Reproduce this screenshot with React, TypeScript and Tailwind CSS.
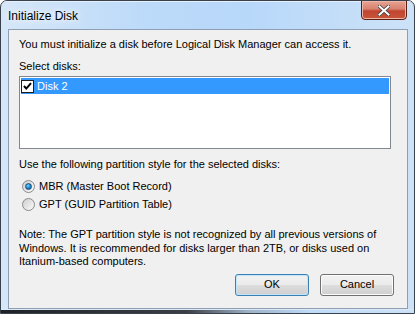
import { useState } from 'react';

const font = { fontFamily: '"Liberation Sans", Arial, sans-serif' };

function Radio({ checked, label, onClick }: { checked: boolean; label: string; onClick: () => void }) {
	return (
		<div className="flex items-center h-[18px] pl-[3px] cursor-default" onClick={onClick}>
			<div className="w-[13px] h-[13px] rounded-full border border-[#8a8a8a] bg-gradient-to-br from-[#cfcfcf] to-[#fafafa] flex items-center justify-center">
				{checked && (
					<div className="w-[7px] h-[7px] rounded-full bg-[radial-gradient(circle_at_40%_35%,#7fd4ff_0%,#1f8fd6_45%,#0d3e6e_100%)] border border-[#1b4f7c]" />
				)}
			</div>
			<span className="ml-[4px]">{label}</span>
		</div>
	);
}

function Button({ label, primary }: { label: string; primary?: boolean }) {
	return (
		<button
			className={
				"w-[74px] h-[22px] rounded-[3px] border text-[11px] text-black bg-[linear-gradient(#f2f2f2_0%,#ebebeb_48%,#dddddd_52%,#cfcfcf_100%)] " +
				(primary ? "border-[#3c7fb1] shadow-[inset_0_0_0_1px_#bfe6fa]" : "border-[#707070] shadow-[inset_0_0_0_1px_#fcfcfc]")
			}
			style={font}
		>{label}</button>
	);
}

export default function App() {
	const [style, setStyle] = useState('mbr');
	const [checked, setChecked] = useState(true);

	return (
		<div className="w-[415px] h-[314px] flex flex-col rounded-t-[7px] border border-[#39414d] bg-[linear-gradient(to_right,#d6e7f8_0%,#bcdaf9_35%,#b8d8fa_60%,#cde2f7_100%)] overflow-hidden text-[11px] text-black" style={font}>
			{/* title bar */}
			<div className="h-[28px] flex items-start border-t border-[#e6f0fb]">
				<span className="pl-[7px] pt-[7px] text-[12px] leading-[14px] [text-shadow:0_0_6px_#ffffff,0_0_10px_#ffffff]">Initialize Disk</span>
				<div className="ml-auto mr-[7px] -mt-[2px] w-[46px] h-[20px] rounded-b-[4px] border border-[#5b2015] bg-[linear-gradient(#e8a493_0%,#d7806d_45%,#c14530_55%,#c7553a_100%)] shadow-[inset_0_0_0_1px_#eeb6a6] flex items-center justify-center">
					<svg width="12" height="11" viewBox="0 0 12 11">
						<path d="M1.5 1.5 L10.5 9.5 M10.5 1.5 L1.5 9.5" stroke="#3d3d3d" strokeWidth="3.6" strokeLinecap="square" />
						<path d="M1.5 1.5 L10.5 9.5 M10.5 1.5 L1.5 9.5" stroke="#ffffff" strokeWidth="2" strokeLinecap="square" />
					</svg>
				</div>
			</div>

			{/* client area */}
			<div className="flex-1 ml-[7px] mr-[6px] border border-[#8f9fb3] bg-[#f0f0f0] flex flex-col pl-[10px] pr-[13px] pt-[8px] leading-[13px]">
				<div>You must initialize a disk before Logical Disk Manager can access it.</div>
				<div className="mt-[9px]">Select disks:</div>
				<div className="mt-[3px] w-[372px] h-[73px] border border-[#828790] bg-white p-[1px]">
					<div className="h-[16px] bg-[#3399ff] text-white flex items-center cursor-default" onClick={() => setChecked(!checked)}>
						<div className="w-[13px] h-[13px] border border-[#1e1e1e] bg-white flex items-center justify-center">
							{checked && (
								<svg width="9" height="9" viewBox="0 0 9 9">
									<path d="M1 4 L3.3 6.6 L8 1.2" stroke="#000" strokeWidth="2" fill="none" />
								</svg>
							)}
						</div>
						<span className="ml-[3px]">Disk 2</span>
					</div>
				</div>
				<div className="mt-[9px]">Use the following partition style for the selected disks:</div>
				<div className="mt-[6px]">
					<Radio checked={style === 'mbr'} label="MBR (Master Boot Record)" onClick={() => setStyle('mbr')} />
					<Radio checked={style === 'gpt'} label="GPT (GUID Partition Table)" onClick={() => setStyle('gpt')} />
				</div>
				<div className="mt-[15px] leading-[13.5px]">
					Note: The GPT partition style is not recognized by all previous versions of<br />
					Windows. It is recommended for disks larger than 2TB, or disks used on<br />
					Itanium-based computers.
				</div>
				<div className="mt-[5px] flex justify-end gap-[11px]">
					<Button label="OK" primary />
					<Button label="Cancel" />
				</div>
			</div>

			{/* bottom frame edge, desktop showing through the glass */}
			<div className="h-[4px] border-t border-[#dde9f6] bg-[linear-gradient(to_right,#1f2226_0%,#3b3f45_45%,#9fb3c8_60%,transparent_75%)]" />
		</div>
	);
}
